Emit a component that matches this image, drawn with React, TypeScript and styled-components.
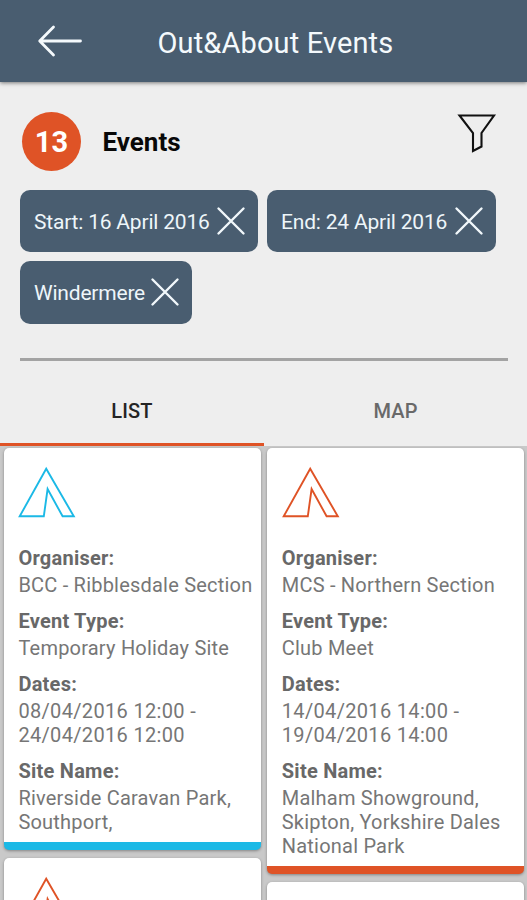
import React from "react";
import styled, { createGlobalStyle } from "styled-components";

const SLATE = "#495d70";
const ORANGE = "#df5326";
const CYAN = "#1bb9e6";

const GlobalStyle = createGlobalStyle`
  * { box-sizing: border-box; }
  html, body { margin: 0; padding: 0; }
  body { font-family: Roboto, "Liberation Sans", sans-serif; background: #eeeeee; }
`;

const Screen = styled.div`
  display: flex;
  flex-direction: column;
  width: 527px;
  height: 900px;
  overflow: hidden;
  background: #eeeeee;
`;

const Header = styled.header`
  position: relative;
  flex: none;
  display: flex;
  align-items: center;
  height: 82px;
  padding: 2px 0 0 37px;
  background: ${SLATE};
  color: #f4f9fc;
  box-shadow: 0 1px 4px rgba(0, 0, 0, 0.5);
`;

const BackIcon = styled.svg`
  display: block;
  width: 46px;
  height: 34px;
  margin-top: -2px;
`;

const Title = styled.h1`
  margin: 1px 0 0 74.5px;
  font-size: 29px;
  font-weight: 400;
  line-height: 36px;
  letter-spacing: 0.13px;
  white-space: nowrap;
`;

const Summary = styled.section`
  flex: none;
  display: flex;
  align-items: center;
  height: 107.5px;
  padding: 10.5px 30px 0 22px;
`;

const Count = styled.span`
  display: flex;
  align-items: center;
  justify-content: center;
  width: 59px;
  height: 59px;
  padding-top: 2px;
  border-radius: 50%;
  background: ${ORANGE};
  color: #fff;
  font-size: 29px;
  font-weight: 700;
`;

const SummaryLabel = styled.h2`
  margin: 2px auto 0 21.5px;
  font-size: 26px;
  font-weight: 700;
  line-height: 32px;
  color: #080808;
`;

const FilterIcon = styled.svg`
  display: block;
  width: 40px;
  height: 42px;
  margin-top: -16px;
`;

const Chips = styled.div`
  flex: none;
  display: flex;
  flex-wrap: wrap;
  gap: 9px;
  padding: 0 20px;
`;

const Chip = styled.button<{ $width: number }>`
  display: flex;
  align-items: center;
  justify-content: space-between;
  width: ${(p) => p.$width}px;
  height: 62.5px;
  padding: 0 12px 0 14px;
  border: 0;
  border-radius: 10px;
  background: ${SLATE};
  color: #eef6fa;
  font: 400 21px/26px Roboto, sans-serif;
  letter-spacing: -0.2px;
  white-space: nowrap;
`;

const ChipLabel = styled.span`
  padding-top: 2px;
`;

const CloseIcon = styled.svg`
  display: block;
  flex: none;
  width: 30px;
  height: 30px;
`;

const Divider = styled.hr`
  flex: none;
  height: 3px;
  margin: 34px 19px 0 20px;
  border: 0;
  background: #a3a3a3;
`;

const Tabs = styled.nav`
  flex: none;
  display: grid;
  grid-template-columns: 264px 263px;
  height: 85.5px;
`;

const Tab = styled.button<{ $active?: boolean }>`
  display: flex;
  align-items: center;
  justify-content: center;
  padding: 19px 0 0;
  border: 0;
  border-bottom: 3px solid ${(p) => (p.$active ? ORANGE : "transparent")};
  background: transparent;
  color: ${(p) => (p.$active ? "#242424" : "#696969")};
  font: 500 20px/24px Roboto, sans-serif;
  letter-spacing: 0.15px;
`;

const Board = styled.main`
  flex: 1;
  display: grid;
  grid-template-columns: 257px 257px;
  column-gap: 6.4px;
  align-items: start;
  min-height: 0;
  overflow: hidden;
  padding: 2px 0 0 4px;
  background: #c9c9c9;
`;

const Column = styled.div`
  display: flex;
  flex-direction: column;
  gap: 8px;
`;

const Card = styled.article<{ $accent: string }>`
  padding: 18px 0 8px 14.4px;
  border-bottom: 8px solid ${(p) => p.$accent};
  border-radius: 5px;
  background: #fff;
  color: #767676;
  box-shadow: 0 1px 3px rgba(0, 0, 0, 0.35);
`;

const TentIcon = styled.svg`
  display: block;
  width: 60px;
  height: 54px;
  margin-bottom: 26px;
`;

const Fields = styled.dl`
  display: flex;
  flex-direction: column;
  gap: 12px;
  margin: 0;
`;

const Field = styled.div`
  display: flex;
  flex-direction: column;
  gap: 3px;
`;

const Term = styled.dt`
  font-size: 20px;
  font-weight: 700;
  line-height: 24px;
  letter-spacing: 0.25px;
  color: #686868;
`;

const Value = styled.dd<{ $numeric?: boolean }>`
  margin: 0;
  font-size: 20px;
  line-height: 24px;
  letter-spacing: ${(p) => (p.$numeric ? 0.33 : 0.21)}px;
  white-space: pre-line;
`;

interface EventInfo {
  accent: string;
  organiser: string;
  type: string;
  dates: string;
  site: string;
}

const leftEvents: EventInfo[] = [
  {
    accent: CYAN,
    organiser: "BCC - Ribblesdale Section",
    type: "Temporary Holiday Site",
    dates: "08/04/2016 12:00 -\n24/04/2016 12:00",
    site: "Riverside Caravan Park,\nSouthport,",
  },
];

const rightEvents: EventInfo[] = [
  {
    accent: ORANGE,
    organiser: "MCS - Northern Section",
    type: "Club Meet",
    dates: "14/04/2016 14:00 -\n19/04/2016 14:00",
    site: "Malham Showground,\nSkipton, Yorkshire Dales\nNational Park",
  },
];

const Tent = ({ color }: { color: string }) => (
  <TentIcon viewBox="0 0 60 54" fill="none" stroke={color} strokeWidth="1.9">
    <path d="M28.2 2.7 L1.7 50.3 H25.8 L29.6 23 L44.6 50.3 H55.8 Z" />
  </TentIcon>
);

const EventCard = ({ event }: { event: EventInfo }) => (
  <Card $accent={event.accent}>
    <Tent color={event.accent} />
    <Fields>
      <Field><Term>Organiser:</Term><Value>{event.organiser}</Value></Field>
      <Field><Term>Event Type:</Term><Value>{event.type}</Value></Field>
      <Field><Term>Dates:</Term><Value $numeric>{event.dates}</Value></Field>
      <Field><Term>Site Name:</Term><Value>{event.site}</Value></Field>
    </Fields>
  </Card>
);

const FilterChip = ({ label, width }: { label: string; width: number }) => (
  <Chip $width={width}>
    <ChipLabel>{label}</ChipLabel>
    <CloseIcon viewBox="0 0 30 30" stroke="#f1f8fb" strokeWidth="2.4" strokeLinecap="round">
      <path d="M2.5 2.5 L27.5 27.5 M27.5 2.5 L2.5 27.5" />
    </CloseIcon>
  </Chip>
);

export default function App() {
  return (
    <Screen>
      <GlobalStyle />
      <Header>
        <BackIcon viewBox="0 0 46 34" fill="none" stroke="#f4f9fc" strokeWidth="2.8" strokeLinecap="round" strokeLinejoin="round">
          <path d="M43.5 17 H3 M16.5 3 L2.7 17 L16.5 31" />
        </BackIcon>
        <Title>Out&amp;About Events</Title>
      </Header>
      <Summary>
        <Count>13</Count>
        <SummaryLabel>Events</SummaryLabel>
        <FilterIcon viewBox="0 0 40 42" fill="none" stroke="#111" strokeWidth="2.1">
          <path d="M2.5 3.5 H37 L24.5 21 V34.5 L16 39 V21 Z" />
        </FilterIcon>
      </Summary>
      <Chips>
        <FilterChip label="Start: 16 April 2016" width={238} />
        <FilterChip label="End: 24 April 2016" width={229} />
        <FilterChip label="Windermere" width={172} />
      </Chips>
      <Divider />
      <Tabs>
        <Tab $active>LIST</Tab>
        <Tab>MAP</Tab>
      </Tabs>
      <Board>
        <Column>
          {leftEvents.map((e) => <EventCard key={e.organiser} event={e} />)}
          <Card $accent={ORANGE}><Tent color={ORANGE} /></Card>
        </Column>
        <Column>
          {rightEvents.map((e) => <EventCard key={e.organiser} event={e} />)}
          <Card $accent={CYAN}><Tent color={CYAN} /></Card>
        </Column>
      </Board>
    </Screen>
  );
}
